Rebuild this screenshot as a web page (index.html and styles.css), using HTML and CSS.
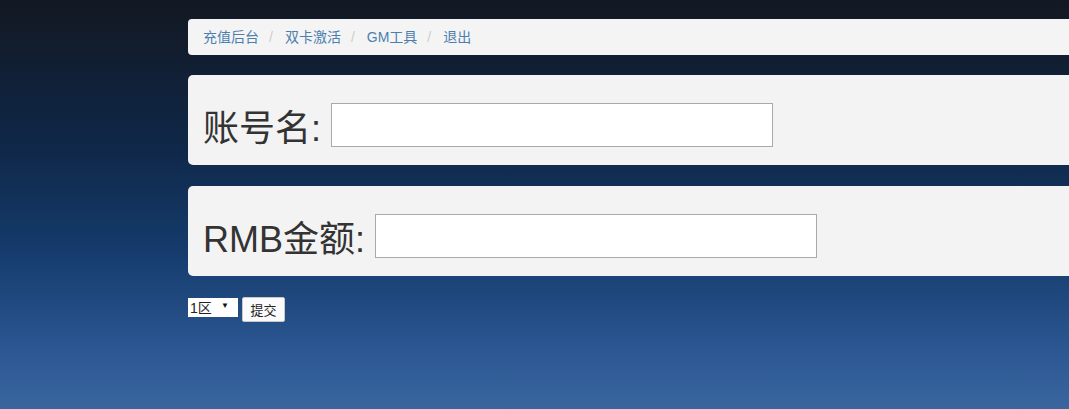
FILE: index.html
```html
<!DOCTYPE html>
<html lang="zh-CN">
<head>
  <meta charset="UTF-8" />
  <title>充值后台</title>
  <link rel="stylesheet" href="styles.css">
</head>
<body>
  <div class="container">

    <!-- 导航 -->
    <ol class="breadcrumb">
      <li><a href="#">充值后台</a></li>
      <li><a href="#">双卡激活</a></li>
      <li><a href="#">GM工具</a></li>
      <li><a href="#">退出</a></li>
    </ol>

    <form class="form-charge">
      <div class="panel">
        <label for="account">账号名:</label>
        <input type="text" id="account" class="campo" />
      </div>

      <div class="panel">
        <label for="rmb">RMB金额:</label>
        <input type="text" id="rmb" class="campo" />
      </div>

      <div class="acoes">
        <span class="zona-box">
          <select class="zona">
            <option>1区</option>
          </select>
        </span>
        <button type="button" class="enviar">提交</button>
      </div>
    </form>

  </div>
</body>
</html>
```

FILE: styles.css
```css
html, body {
  height: 100%;
}

body {
  margin: 0;
  padding: 0;
  font-family: "Liberation Sans", "Noto Sans CJK SC", sans-serif;
  color: #333;
  background: linear-gradient(to bottom, #131822 0%, #0f2747 35%, #153c6d 62%, #2b5691 85%, #3a66a0 100%);
}

.container {
  padding: 19px 0 0 188px;
}

.breadcrumb {
  list-style: none;
  margin: 0 0 20px 0;
  padding: 8px 15px;
  background: #f4f4f5;
  border-radius: 4px 0 0 4px;
  font-size: 14px;
  line-height: 20px;
  display: flex;
}

.breadcrumb li + li::before {
  content: "/";
  color: #ccc;
  padding: 0 12px 0 10px;
}

.breadcrumb a {
  color: #4d7fae;
  text-decoration: none;
}

.panel {
  display: flex;
  align-items: center;
  height: 90px;
  box-sizing: border-box;
  padding: 10px 15px 0 15px;
  margin-bottom: 21px;
  background: #f3f3f3;
  border-radius: 5px 0 0 5px;
}

.panel label {
  font-size: 36px;
  color: #333;
  margin-right: 10px;
}

.campo {
  width: 440px;
  height: 42px;
  margin: 0;
  padding: 0;
  border: 1px solid #a9a9a9;
  background: #fff;
}

.acoes {
  display: flex;
  align-items: flex-start;
  gap: 4px;
}

.zona-box {
  position: relative;
  display: inline-block;
  margin-top: 1px;
}

.zona-box::after {
  content: "▼";
  position: absolute;
  right: 9px;
  top: 3px;
  font-size: 8px;
  color: #111;
  pointer-events: none;
}

.zona {
  -webkit-appearance: none;
  appearance: none;
  display: block;
  width: 50px;
  height: 19px;
  font-size: 14px;
  font-family: "Liberation Sans", "Noto Sans CJK SC", sans-serif;
  color: #222;
  border: none;
  background: #fff;
  padding: 0 0 0 2px;
  border-radius: 0;
}

.enviar {
  width: 43px;
  height: 25px;
  font-size: 13px;
  font-family: "Liberation Sans", "Noto Sans CJK SC", sans-serif;
  background: #fafafa;
  border: 1px solid #c8c8c8;
  border-radius: 2px;
  padding: 0;
  color: #222;
}
```
